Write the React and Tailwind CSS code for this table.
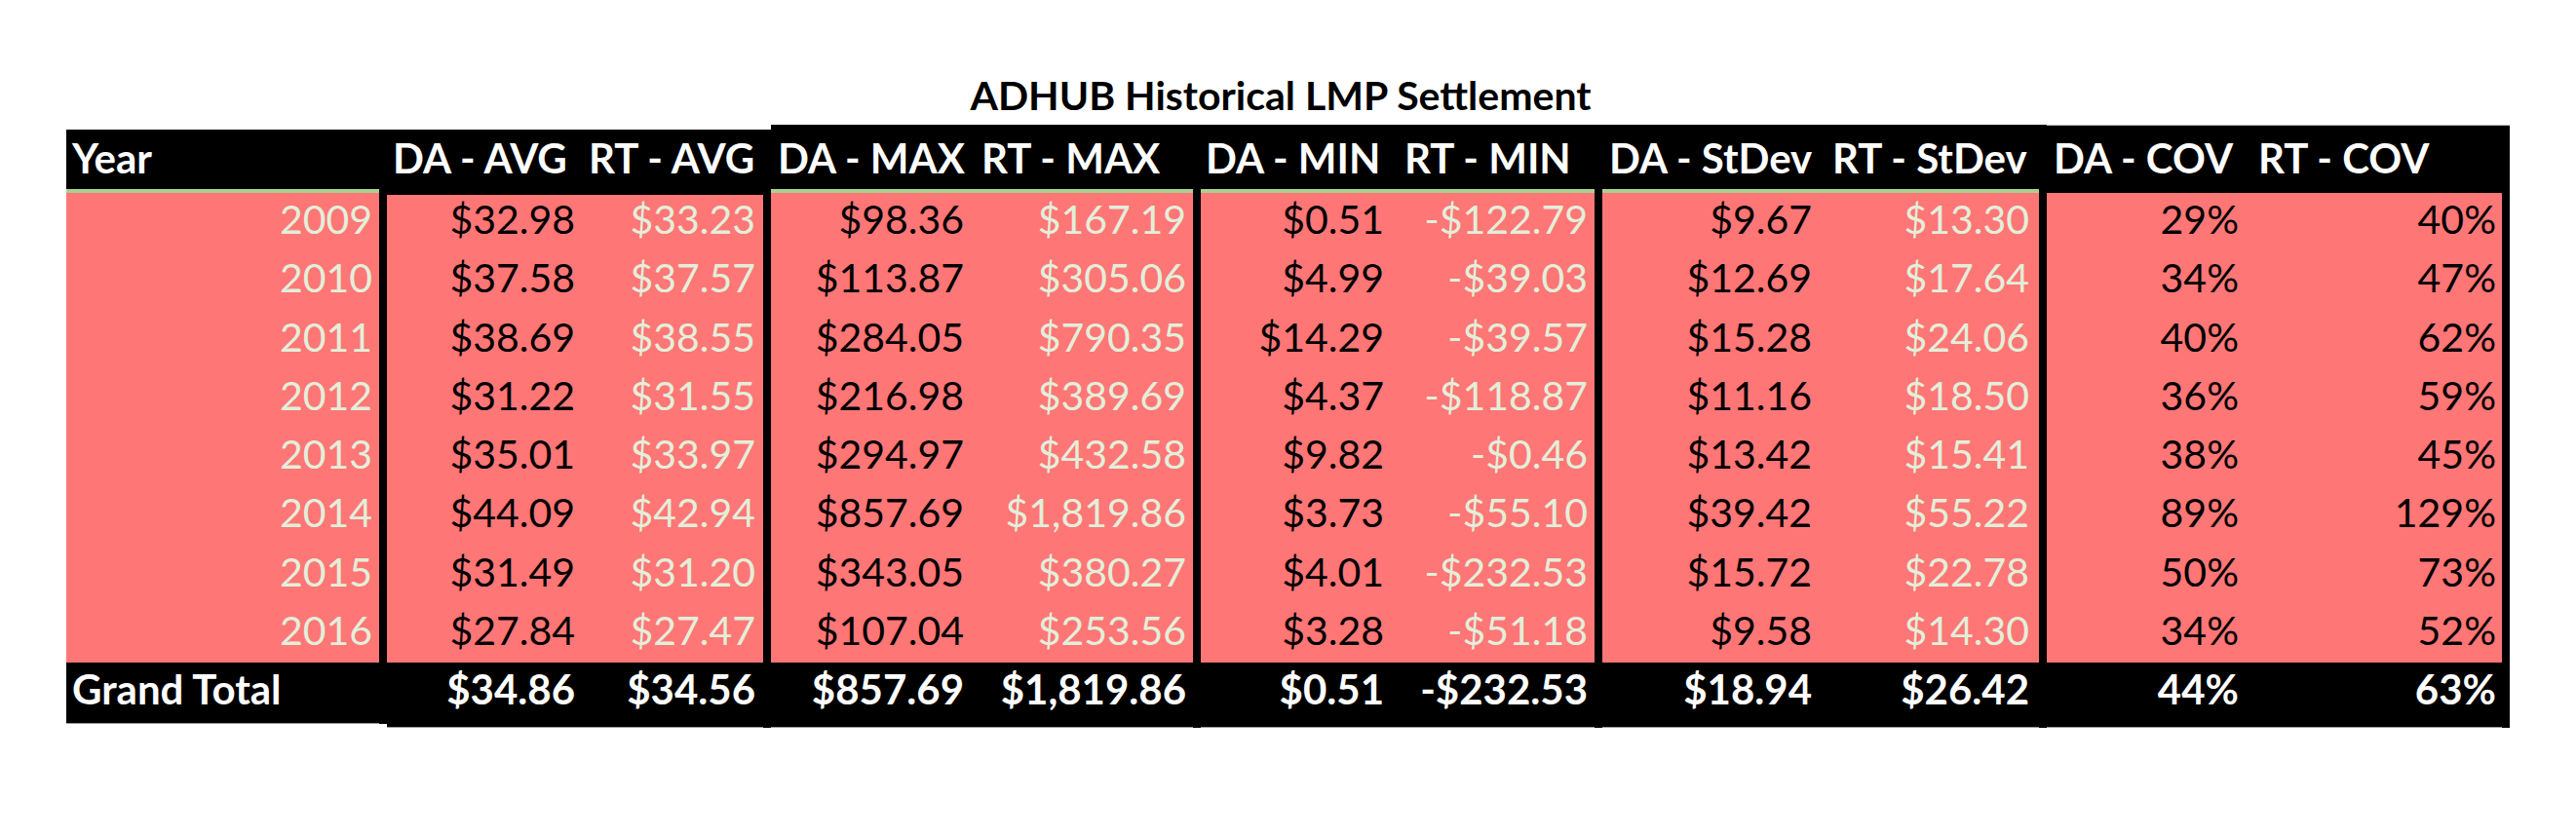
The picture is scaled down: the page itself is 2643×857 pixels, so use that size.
import React from "react";

const years = ["2009", "2010", "2011", "2012", "2013", "2014", "2015", "2016"];

const groups = [
  {
    outer: "mt-[5px]",
    header: "h-[61px] pt-[8px]",
    green: true,
    pink: "",
    gt: "h-[63px] border-b border-[#9a9a9a]",
    cols: [
      {
        w: "w-[321px]",
        hpl: "pl-[6px]",
        vpr: "pr-[7px]",
        title: "Year",
        color: "text-[#E2EFDA]",
        vals: years,
        total: "Grand Total",
        totalLeft: true,
      },
    ],
  },
  {
    outer: "mt-[5px]",
    header: "h-[65px] pt-[8px]",
    green: false,
    pink: "shadow-[inset_0_2px_0_#000]",
    gt: "h-[67px] border-b border-[#9a9a9a]",
    cols: [
      {
        w: "w-[201px]",
        hpl: "pl-[6px]",
        vpr: "pr-[8px]",
        title: "DA - AVG",
        color: "text-black",
        vals: ["$32.98", "$37.58", "$38.69", "$31.22", "$35.01", "$44.09", "$31.49", "$27.84"],
        total: "$34.86",
      },
      {
        w: "w-[185px]",
        hpl: "pl-[6px]",
        vpr: "pr-[8px]",
        title: "RT - AVG",
        color: "text-[#E2EFDA]",
        vals: ["$33.23", "$37.57", "$38.55", "$31.55", "$33.97", "$42.94", "$31.20", "$27.47"],
        total: "$34.56",
      },
    ],
  },
  {
    outer: "",
    header: "h-[66px] pt-[13px]",
    green: true,
    pink: "",
    gt: "h-[67px] border-b border-[#9a9a9a]",
    cols: [
      {
        w: "w-[206px]",
        hpl: "pl-[7px]",
        vpr: "pr-[8px]",
        title: "DA - MAX",
        color: "text-black",
        vals: ["$98.36", "$113.87", "$284.05", "$216.98", "$294.97", "$857.69", "$343.05", "$107.04"],
        total: "$857.69",
      },
      {
        w: "w-[227px]",
        hpl: "pl-[10px]",
        vpr: "pr-[7px]",
        title: "RT - MAX",
        color: "text-[#E2EFDA]",
        vals: ["$167.19", "$305.06", "$790.35", "$389.69", "$432.58", "$1,819.86", "$380.27", "$253.56"],
        total: "$1,819.86",
      },
    ],
  },
  {
    outer: "",
    header: "h-[66px] pt-[13px]",
    green: true,
    pink: "",
    gt: "h-[67px] border-b border-[#9a9a9a]",
    cols: [
      {
        w: "w-[197px]",
        hpl: "pl-[5px]",
        vpr: "pr-[9px]",
        title: "DA - MIN",
        color: "text-black",
        vals: ["$0.51", "$4.99", "$14.29", "$4.37", "$9.82", "$3.73", "$4.01", "$3.28"],
        total: "$0.51",
      },
      {
        w: "w-[207px]",
        hpl: "pl-[12px]",
        vpr: "pr-[7px]",
        title: "RT - MIN",
        color: "text-[#E2EFDA]",
        vals: ["-$122.79", "-$39.03", "-$39.57", "-$118.87", "-$0.46", "-$55.10", "-$232.53", "-$51.18"],
        total: "-$232.53",
      },
    ],
  },
  {
    outer: "",
    header: "h-[66px] pt-[13px]",
    green: true,
    pink: "",
    gt: "h-[67px] border-b border-[#9a9a9a]",
    cols: [
      {
        w: "w-[225px]",
        hpl: "pl-[7px]",
        vpr: "pr-[10px]",
        title: "DA - StDev",
        color: "text-black",
        vals: ["$9.67", "$12.69", "$15.28", "$11.16", "$13.42", "$39.42", "$15.72", "$9.58"],
        total: "$18.94",
      },
      {
        w: "w-[223px]",
        hpl: "pl-[11px]",
        vpr: "pr-[10px]",
        title: "RT - StDev",
        color: "text-[#E2EFDA]",
        vals: ["$13.30", "$17.64", "$24.06", "$18.50", "$15.41", "$55.22", "$22.78", "$14.30"],
        total: "$26.42",
      },
    ],
  },
  {
    outer: "border-t border-[#b5b5b5]",
    header: "h-[69px] pt-[12px]",
    green: false,
    pink: "",
    gt: "h-[67px] border-b border-[#9a9a9a]",
    cols: [
      {
        w: "w-[205px]",
        hpl: "pl-[7px]",
        vpr: "pr-[8px]",
        title: "DA - COV",
        color: "text-black",
        vals: ["29%", "34%", "40%", "36%", "38%", "89%", "50%", "34%"],
        total: "44%",
      },
      {
        w: "w-[262px]",
        hpl: "pl-[12px]",
        vpr: "pr-[6px]",
        title: "RT - COV",
        color: "text-black",
        vals: ["40%", "47%", "62%", "59%", "45%", "129%", "73%", "52%"],
        total: "63%",
      },
    ],
  },
];

function Group({ g }) {
  return (
    <div className={`flex flex-col bg-black pr-[8px] ${g.outer}`}>
      <div className={`flex ${g.header}`}>
        {g.cols.map((c, i) => (
          <div
            key={i}
            className={`${c.w} ${c.hpl} whitespace-nowrap text-[42px] leading-[42px] font-bold text-white`}
          >
            {c.title}
          </div>
        ))}
      </div>
      {g.green && <div className="h-[4px] bg-[#A9D08E]" />}
      <div className={`flex h-[482px] bg-[#FF7676] ${g.pink}`}>
        {g.cols.map((c, i) => (
          <div key={i} className={`${c.w} flex flex-col`}>
            {c.vals.map((v, j) => (
              <div
                key={j}
                className={`h-[60.25px] pt-[6px] ${c.vpr} text-right whitespace-nowrap text-[41px] leading-[41px] ${c.color}`}
              >
                {v}
              </div>
            ))}
          </div>
        ))}
      </div>
      <div className={`flex ${g.gt}`}>
        {g.cols.map((c, i) => (
          <div
            key={i}
            className={`${c.w} pt-[6px] whitespace-nowrap text-[42px] leading-[42px] font-bold text-white ${
              c.totalLeft ? `text-left ${c.hpl}` : `text-right ${c.vpr}`
            }`}
          >
            {c.total}
          </div>
        ))}
      </div>
    </div>
  );
}

export default function App() {
  return (
    <div className="w-[2643px] h-[857px] bg-white pt-[77px] pl-[68px] font-['Lato',sans-serif] overflow-hidden">
      <div className="w-[2508px] pr-[16px] text-center text-[41px] leading-[41px] font-bold text-black whitespace-nowrap">
        ADHUB Historical LMP Settlement
      </div>
      <div className="mt-[10px] flex items-start">
        {groups.map((g, i) => (
          <Group key={i} g={g} />
        ))}
      </div>
    </div>
  );
}
